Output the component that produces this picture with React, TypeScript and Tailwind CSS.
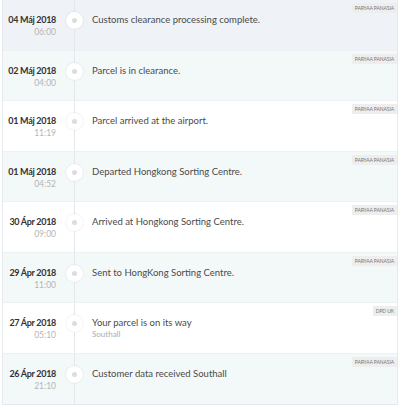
const events = [
  { date: "04 Máj 2018", time: "06:00", text: "Customs clearance processing complete.", badge: "PARYAA PANASIA" },
  { date: "02 Máj 2018", time: "04:00", text: "Parcel is in clearance.", badge: "PARYAA PANASIA" },
  { date: "01 Máj 2018", time: "11:19", text: "Parcel arrived at the airport.", badge: "PARYAA PANASIA" },
  { date: "01 Máj 2018", time: "04:52", text: "Departed Hongkong Sorting Centre.", badge: "PARYAA PANASIA" },
  { date: "30 Ápr 2018", time: "09:00", text: "Arrived at Hongkong Sorting Centre.", badge: "PARYAA PANASIA" },
  { date: "29 Ápr 2018", time: "11:00", text: "Sent to HongKong Sorting Centre.", badge: "PARYAA PANASIA" },
  { date: "27 Ápr 2018", time: "05:10", text: "Your parcel is on its way", sub: "Southall", badge: "DPD UK" },
  { date: "26 Ápr 2018", time: "21:10", text: "Customer data received Southall", badge: "PARYAA PANASIA" },
]

function rowBg(i: number) {
  if (i === 0) return "bg-[#eff3f8]"
  return i % 2 === 1 ? "bg-[#f3f8f9]" : "bg-white"
}

export default function App() {
  return (
    <div className="h-[407px] w-[400px] overflow-hidden bg-white font-['Lato',sans-serif]">
      <div className="mx-[2px] border-x border-b border-[#e6eaee]">
        {events.map((e, i) => (
          <div key={i} className={`relative flex h-[50.5px] border-b border-[#edf1f3] last:border-b-0 ${rowBg(i)}`}>
            <div className="flex w-[53px] shrink-0 flex-col items-end pt-[14px]">
              <span className="whitespace-nowrap text-[9px] font-bold leading-[12px] tracking-[-0.3px] text-[#333]">{e.date}</span>
              <span className="whitespace-nowrap text-[8.5px] leading-[12px] text-[#b5b5b5]">{e.time}</span>
            </div>
            <div className="relative flex w-[36px] shrink-0 justify-center">
              <div className="absolute inset-y-0 left-1/2 w-px bg-[#e4e8ec]" />
              <div className="relative mt-[12px] flex h-[17px] w-[17px] items-center justify-center rounded-full bg-white shadow-[0_0_2px_rgba(0,0,0,0.12)]">
                <div className="h-[5px] w-[5px] rounded-full bg-[#dcdcdc]" />
              </div>
            </div>
            <div className="flex flex-col pt-[13px]">
              <span className="whitespace-nowrap text-[9.5px] leading-[14px] text-[#4a4a4a]">{e.text}</span>
              {e.sub && <span className="text-[8px] leading-[9px] text-[#aab]">{e.sub}</span>}
            </div>
            <span className="absolute right-0 top-[3px] bg-[#eeeeee] px-[3px] py-[2px] text-[5px] leading-[6px] tracking-[-0.1px] text-[#777]">
              {e.badge}
            </span>
          </div>
        ))}
      </div>
    </div>
  )
}
